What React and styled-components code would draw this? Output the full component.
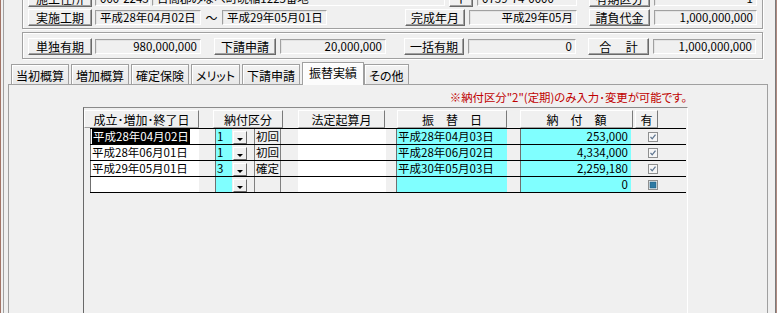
import styled, { createGlobalStyle } from "styled-components";

const Global = createGlobalStyle`
  html, body { margin: 0; padding: 0; background: #f0f0f0; }
  body {
    font-family: "Noto Sans CJK JP", "Noto Sans", sans-serif;
    font-feature-settings: "palt";
    color: #000;
  }
`;

const Window = styled.div`
  width: 777px;
  height: 313px;
  overflow: hidden;
  display: flex;
  flex-direction: column;
  background: #f0f0f0;
  box-shadow: inset 1px 0 0 #a27466, inset 3px 0 0 #f0f0f0, inset 4px 0 0 #a0a0a0,
    inset -1px 0 0 #b08a80, inset -2px 0 0 #7a7a7a;
`;

const Group = styled.div`
  margin: ${(p) => p.$mt}px 0 0 22px;
  width: 741px;
  box-sizing: border-box;
  border: 1px solid #a0a0a0;
  box-shadow: inset 1px 1px 0 #fff, 1px 1px 0 #fff;
  padding: ${(p) => p.$pt}px 4px ${(p) => p.$pb}px 5px;
  display: flex;
  flex-direction: column;
  gap: 2px;
  flex-shrink: 0;
`;

const Row = styled.div`
  display: flex;
  align-items: center;
  height: 17px;
`;

const Btn = styled.div`
  width: ${(p) => p.$w}px;
  margin-left: ${(p) => p.$ml || 0}px;
  height: 17px;
  box-sizing: border-box;
  border: 1px solid;
  border-color: #fff #696969 #696969 #fff;
  box-shadow: inset -1px -1px 0 #a0a0a0;
  display: flex;
  align-items: center;
  justify-content: center;
  font-size: 12px;
  line-height: 1;
  white-space: pre;
  flex-shrink: 0;
`;

const Field = styled.div`
  width: ${(p) => p.$w}px;
  margin-left: ${(p) => p.$ml || 0}px;
  height: 15px;
  box-sizing: border-box;
  border: 1px solid;
  border-color: #a0a0a0 #fff #fff #a0a0a0;
  box-shadow: 1px 1px 0 #e3e3e3 inset;
  padding: 0 3px 0 4px;
  font-size: 11.5px;
  line-height: 13px;
  text-align: ${(p) => p.$align || "left"};
  white-space: nowrap;
  overflow: hidden;
  flex-shrink: 0;
`;

const Tilde = styled.span`
  width: 21px;
  text-align: center;
  font-size: 12px;
  flex-shrink: 0;
`;

const TabStrip = styled.div`
  display: flex;
  align-items: flex-end;
  height: 23px;
  margin: 3px 0 -1px 11px;
  position: relative;
  z-index: 1;
  flex-shrink: 0;
`;

const Tab = styled.div`
  height: ${(p) => (p.$active ? 23 : 20)}px;
  margin: ${(p) => (p.$active ? "0" : "0 2px 1px 0")};
  padding: ${(p) => (p.$active ? "2px 6px 0" : "3px 4px 0")};
  box-sizing: border-box;
  border: 1px solid #a0a0a0;
  border-bottom: none;
  background: ${(p) => (p.$active ? "#fcfcfc" : "linear-gradient(#f3f3f3, #e8e8e8)")};
  box-shadow: inset 1px 1px 0 #fff;
  font-size: 12px;
  line-height: 15px;
  white-space: nowrap;
`;

const Panel = styled.div`
  margin-left: 8px;
  width: 760px;
  flex: 1;
  min-height: 0;
  box-sizing: border-box;
  border: 1px solid #a0a0a0;
  border-bottom: none;
  background: #f0f0f0;
  display: flex;
  flex-direction: column;
`;

const Note = styled.div`
  margin-top: 6px;
  padding-right: 80px;
  height: 13px;
  text-align: right;
  color: #c00000;
  font-size: 11.4px;
  line-height: 13px;
  white-space: nowrap;
  margin-bottom: 1px;
`;

const GridBox = styled.div`
  margin: 2px 0 0 74px;
  width: 605px;
  flex: 1;
  box-sizing: border-box;
  border-left: 1px solid #696969;
  border-top: 1px solid #8a8a8a;
  border-right: 1px solid #fff;
  padding-top: 2px;
`;

const HeaderRow = styled.div`
  display: flex;
  height: 18px;
`;

const HeadCell = styled.div`
  width: ${(p) => p.$w}px;
  margin-left: ${(p) => p.$ml || 0}px;
  box-sizing: border-box;
  border: 1px solid;
  border-color: #fff #7a7a7a #a0a0a0 #fff;
  display: flex;
  align-items: center;
  justify-content: center;
  font-size: 12px;
  white-space: pre;
`;

const DataRow = styled.div`
  display: flex;
  margin-left: 6px;
  width: 596px;
  height: 16px;
  box-sizing: border-box;
  border-top: 1px solid #000;
  ${(p) => p.$last && "height: 17px; border-bottom: 1px solid #000;"}
`;

const Cell = styled.div`
  width: ${(p) => p.$w}px;
  margin-left: ${(p) => p.$ml || 0}px;
  height: 15px;
  box-sizing: border-box;
  background: ${(p) => p.$bg || "#fff"};
  border-left: 1px solid ${(p) => (p.$edge ? "#707070" : "transparent")};
  padding: ${(p) => (p.$align === "right" ? "0 3px 0 0" : "0 0 0 1px")};
  text-align: ${(p) => p.$align || "left"};
  font-size: 11.5px;
  line-height: 15px;
  white-space: nowrap;
  overflow: hidden;
  flex-shrink: 0;
`;

const Sel = styled.span`
  background: #000;
  color: #fff;
  padding: 0 1px;
`;

const DropBtn = styled.div`
  width: 14px;
  height: 13px;
  margin: 2px 0 0 ${(p) => p.$ml || 0}px;
  box-sizing: border-box;
  border: 1px solid;
  border-color: #fff #696969 #696969 #fff;
  background: #f0f0f0;
  display: flex;
  justify-content: center;
  align-items: flex-end;
  padding-bottom: 2px;
  flex-shrink: 0;
  &::after {
    content: "";
    border-left: 3.5px solid transparent;
    border-right: 3.5px solid transparent;
    border-top: 3.5px solid #000;
  }
`;

const Label = styled.div`
  width: ${(p) => p.$w}px;
  margin-left: ${(p) => p.$ml}px;
  height: 15px;
  box-sizing: border-box;
  border-left: 1px solid #808080;
  border-right: 1px solid #808080;
  padding-left: 1px;
  font-size: 11.5px;
  line-height: 15px;
  white-space: nowrap;
  overflow: hidden;
  flex-shrink: 0;
`;

const CheckWrap = styled.div`
  width: 10px;
  margin-left: 17px;
  height: 15px;
  display: flex;
  align-items: center;
  flex-shrink: 0;
`;

function Check({ on }) {
  return (
    <CheckWrap>
      <svg width="10" height="10" viewBox="0 0 10 10">
        <rect x="0.5" y="0.5" width="9" height="9" fill="#f6f6f6" stroke="#8e8f8f" />
        {on ? (
          <path d="M2.5 4.8 L4.2 6.8 L7.5 2.6" stroke="#5f7690" strokeWidth="1.3" fill="none" />
        ) : (
          <rect x="2" y="2" width="6" height="6" fill="#2f7aa3" stroke="#1d5f82" strokeWidth="0.6" />
        )}
      </svg>
    </CheckWrap>
  );
}

const rows = [
  { date: "平成28年04月02日", kubun: "1", label: "初回", furikae: "平成28年04月03日", gaku: "253,000", on: true, sel: true },
  { date: "平成28年06月01日", kubun: "1", label: "初回", furikae: "平成28年06月02日", gaku: "4,334,000", on: true },
  { date: "平成29年05月01日", kubun: "3", label: "確定", furikae: "平成30年05月03日", gaku: "2,259,180", on: true },
  { date: "", kubun: "", label: "", furikae: "", gaku: "0", on: false },
];

const tabs = ["当初概算", "増加概算", "確定保険", "メリット", "下請申請", "振替実績", "その他"];

export default function App() {
  return (
    <>
      <Global />
      <Window>
        <Group $mt={-14} $pt={3} $pb={2}>
          <Row>
            <Btn $w={64}>施工住所</Btn>
            <Field $w={55} $ml={3}>000-2243</Field>
            <Field $w={293} $ml={2}>日高郡みなべ町晩稲1225番地</Field>
            <Btn $w={24} $ml={4}>〒</Btn>
            <Field $w={100} $ml={4}>0739-74-0000</Field>
            <Btn $w={61} $ml={12}>有期区分</Btn>
            <Field $w={103} $ml={4} $align="right">1</Field>
          </Row>
          <Row>
            <Btn $w={64}>実施工期</Btn>
            <Field $w={106} $ml={3}>平成28年04月02日</Field>
            <Tilde>～</Tilde>
            <Field $w={105}>平成29年05月01日</Field>
            <Btn $w={60} $ml={78}>完成年月</Btn>
            <Field $w={108} $ml={4} $align="right">平成29年05月</Field>
            <Btn $w={61} $ml={12}>請負代金</Btn>
            <Field $w={103} $ml={4} $align="right">1,000,000,000</Field>
          </Row>
        </Group>

        <Group $mt={3} $pt={5} $pb={3}>
          <Row>
            <Btn $w={64}>単独有期</Btn>
            <Field $w={106} $ml={3} $align="right">980,000,000</Field>
            <Btn $w={62} $ml={13}>下請申請</Btn>
            <Field $w={106} $ml={4} $align="right">20,000,000</Field>
            <Btn $w={60} $ml={18}>一括有期</Btn>
            <Field $w={108} $ml={4} $align="right">0</Field>
            <Btn $w={61} $ml={12}>{"合　 計"}</Btn>
            <Field $w={103} $ml={4} $align="right">1,000,000,000</Field>
          </Row>
        </Group>

        <TabStrip>
          {tabs.map((t) => (
            <Tab key={t} $active={t === "振替実績"}>
              {t}
            </Tab>
          ))}
        </TabStrip>

        <Panel>
          <Note>※納付区分"2"(定期)のみ入力･変更が可能です。</Note>
          <GridBox>
            <HeaderRow>
              <HeadCell $w={115}>成立･増加･終了日</HeadCell>
              <HeadCell $w={70} $ml={14}>納付区分</HeadCell>
              <HeadCell $w={87} $ml={15}>法定起算月</HeadCell>
              <HeadCell $w={110} $ml={12}>{"振　替　日"}</HeadCell>
              <HeadCell $w={113} $ml={13}>{"納　付　額"}</HeadCell>
              <HeadCell $w={23} $ml={2}>有</HeadCell>
            </HeaderRow>
            {rows.map((r, i) => (
              <DataRow key={i} $last={i === rows.length - 1}>
                <Cell $w={109} $edge>
                  {r.sel ? <Sel>{r.date}</Sel> : r.date}
                </Cell>
                <Cell $w={17} $ml={16} $bg="#80ffff" $edge>
                  {r.kubun}
                </Cell>
                <DropBtn $ml={1} />
                <Label $w={27} $ml={7}>{r.label}</Label>
                <Cell $w={88} $ml={17}></Cell>
                <Cell $w={111} $ml={10} $bg="#80ffff" $edge>
                  {r.furikae}
                </Cell>
                <Cell $w={111} $ml={13} $bg="#80ffff" $edge $align="right">
                  {r.gaku}
                </Cell>
                <Check on={r.on} />
              </DataRow>
            ))}
          </GridBox>
        </Panel>
      </Window>
    </>
  );
}
